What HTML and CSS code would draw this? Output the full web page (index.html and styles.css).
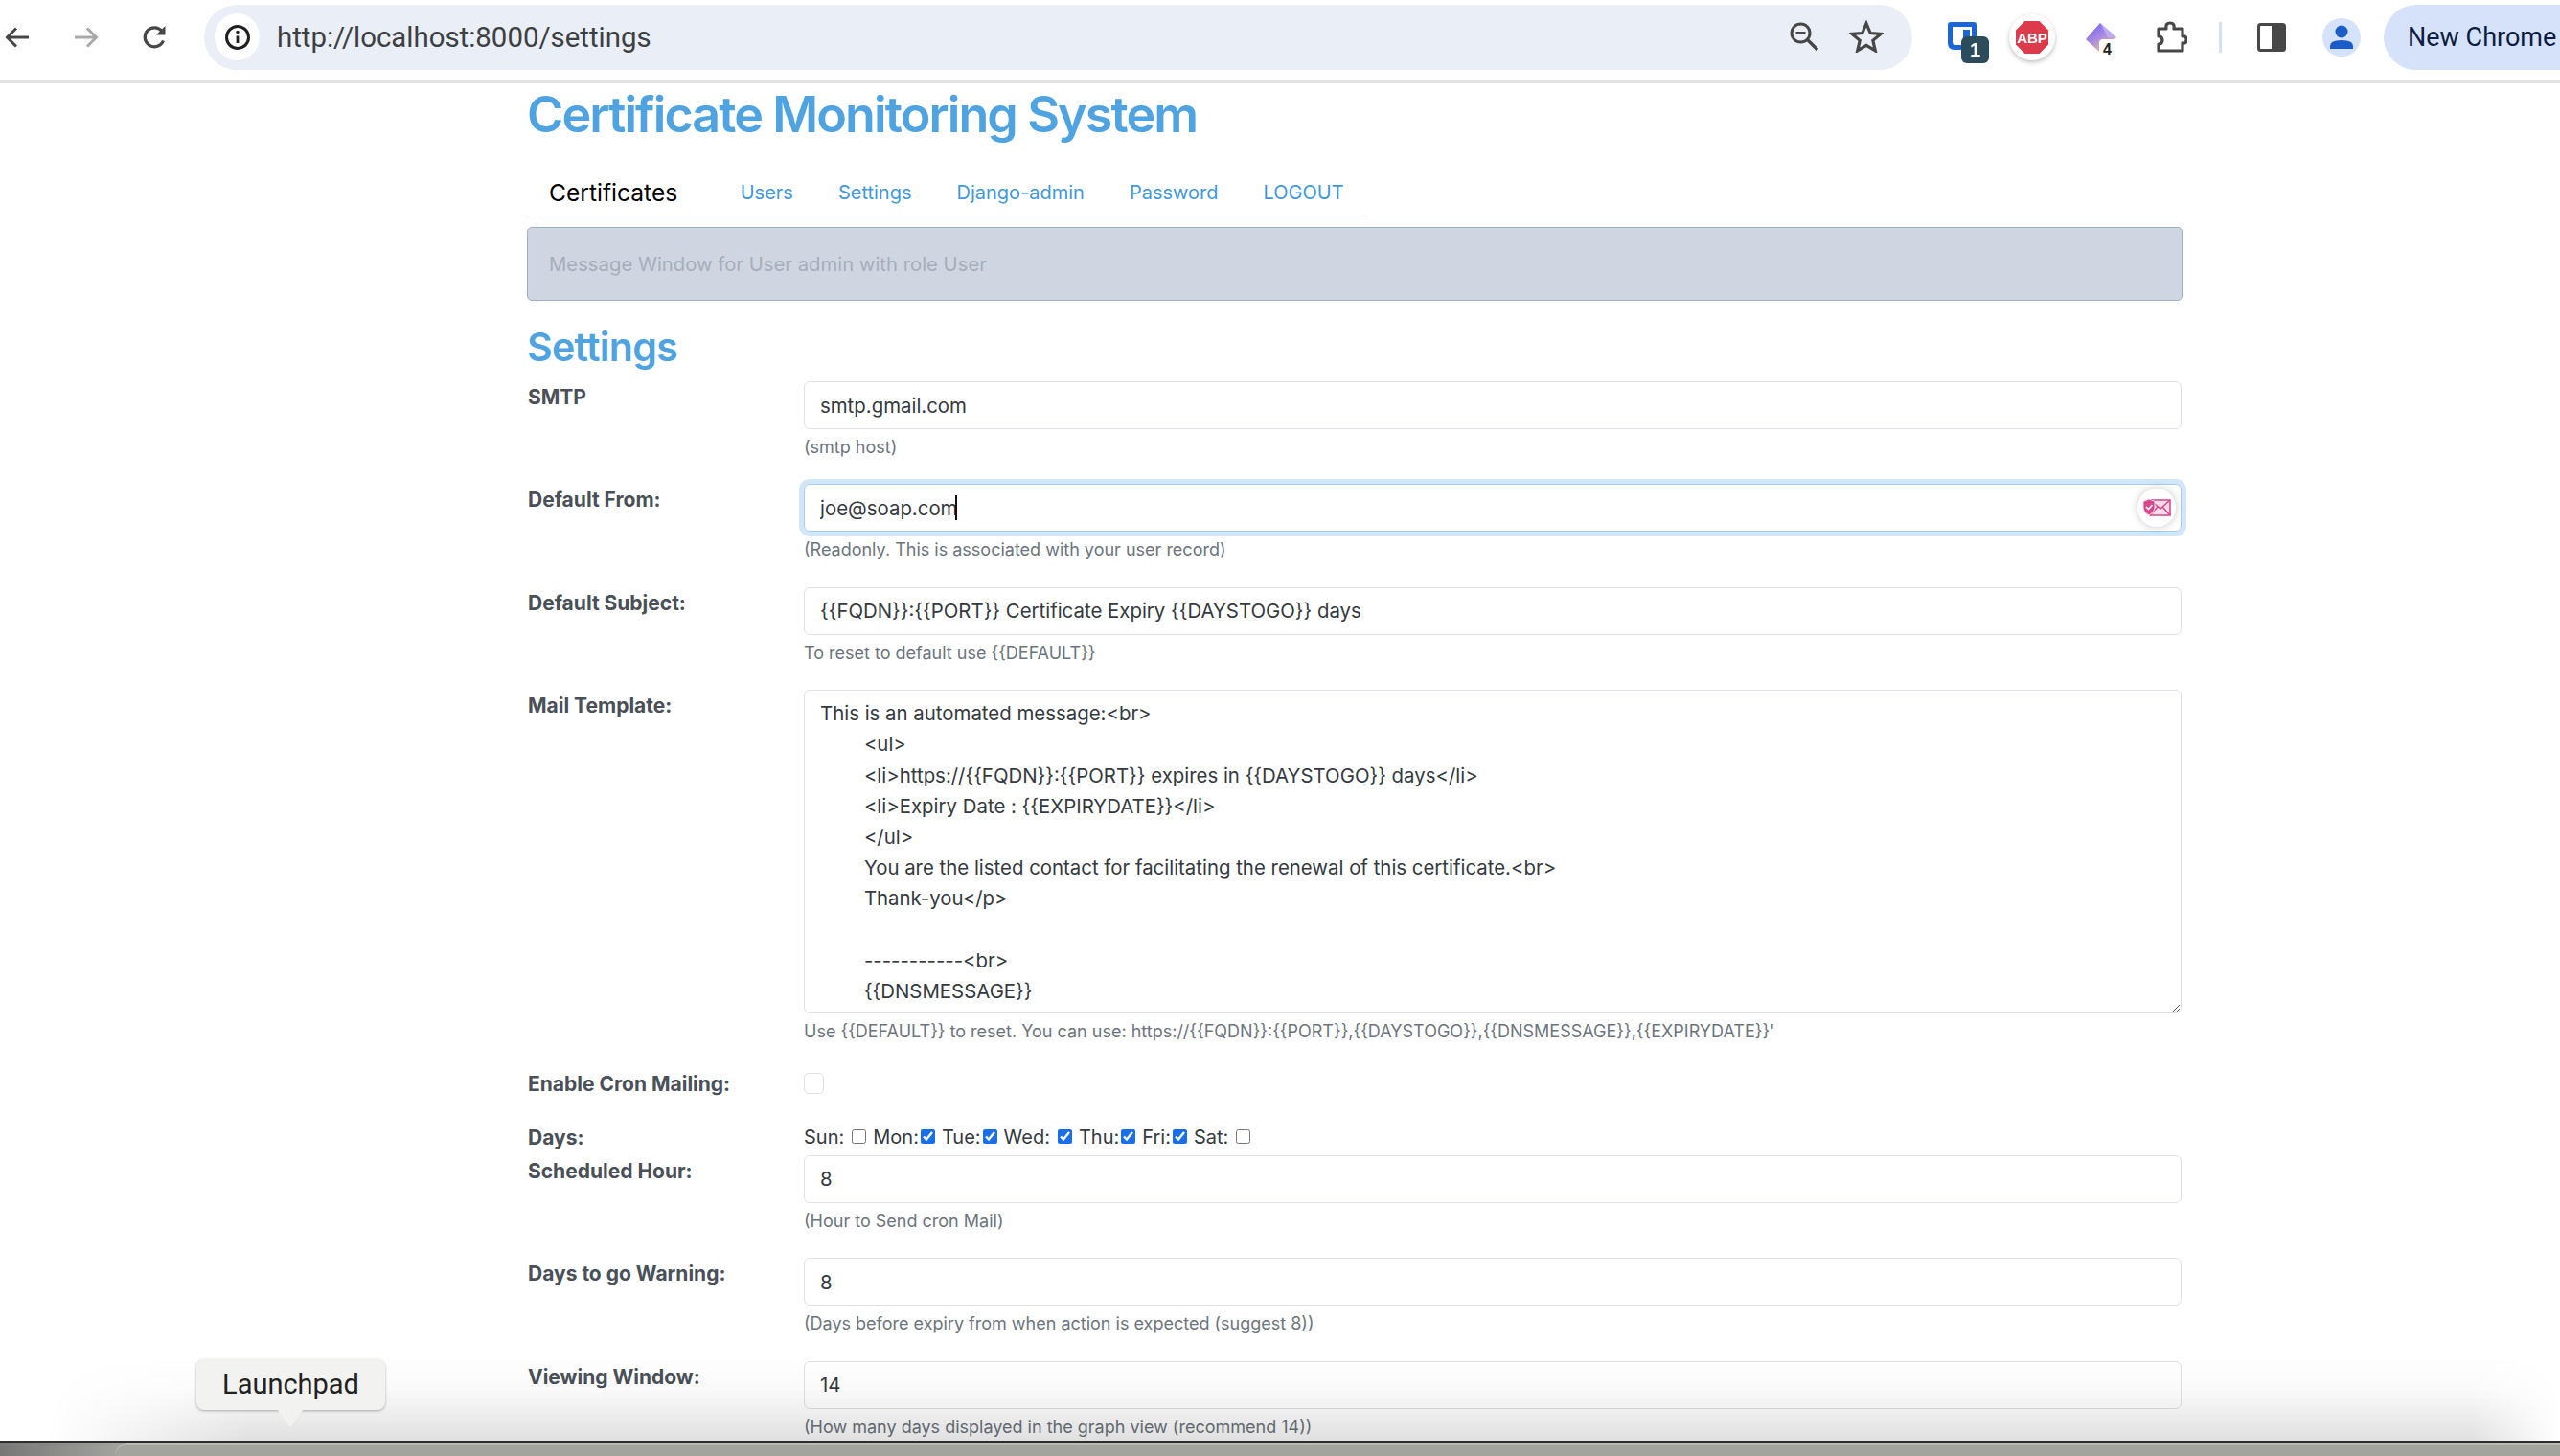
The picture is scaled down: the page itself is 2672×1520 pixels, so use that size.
FILE: index.html
```html
<!DOCTYPE html>
<html lang="en">
<head>
  <meta charset="UTF-8">
  <title>Certificate Monitoring System</title>
  <link rel="stylesheet" href="styles.css">
</head>
<body>
  <header class="toolbar">
    <div class="nav-buttons">
      <svg class="nav-icon" width="30" height="30" viewBox="0 0 30 30"><path d="M27 15H5M14 5.500 4.500 15l9.500 9.500" fill="none" stroke="#474747" stroke-width="3"/></svg>
      <svg class="nav-icon nav-fwd" width="30" height="30" viewBox="0 0 30 30"><path d="M3 15h22M16 5.500l9.500 9.500-9.500 9.500" fill="none" stroke="#a9a9a9" stroke-width="3"/></svg>
      <svg class="nav-icon nav-reload" width="30" height="30" viewBox="0 0 30 30"><path d="M23.500 18.500A10 10 0 1 1 22 8.500" fill="none" stroke="#474747" stroke-width="3.200"/><path d="M25.500 3v9.500H16z" fill="#474747"/></svg>
    </div>
    <div class="omnibox">
      <span class="site-info">
        <svg width="30" height="30" viewBox="0 0 30 30"><circle cx="15" cy="15" r="11.500" fill="none" stroke="#1f1f1f" stroke-width="3"/><path d="M15 13.500v7.500" stroke="#1f1f1f" stroke-width="2.800"/><circle cx="15" cy="9.500" r="1.700" fill="#1f1f1f"/></svg>
      </span>
      <span class="url">http://localhost:8000/settings</span>
      <svg class="omni-zoom" width="32" height="32" viewBox="0 0 32 32"><circle cx="12.500" cy="12.500" r="9.500" fill="none" stroke="#474747" stroke-width="3"/><path d="M7.500 12.500h10" stroke="#474747" stroke-width="3"/><path d="M19.500 19.500 30 30" stroke="#474747" stroke-width="3.400"/></svg>
      <svg class="omni-star" width="36" height="34" viewBox="0 0 36 34"><path d="m18 3.500 4.200 10 10.800.9-8.200 7 2.500 10.500L18 26.300 8.700 31.900l2.500-10.500-8.200-7 10.800-.9z" fill="none" stroke="#474747" stroke-width="3.200"/></svg>
    </div>
    <div class="extensions">
      <span class="ext ext-shield">
        <svg width="32" height="34" viewBox="0 0 32 34"><path d="M1 4q0-3 3-3h24q3 0 3 3v26H8q-7 0-7-7z" fill="#1a66d9"/><path d="M6 6h20v19H9q-3 0-3-3z" fill="#fff"/><path d="M17 9h7v11h-7z" fill="#1a66d9"/></svg>
        <span class="ext-badge">1</span>
      </span>
      <span class="ext ext-abp">
        <svg width="36" height="36" viewBox="0 0 36 36"><path d="M10.500 1h15L35 10.500v15L25.500 35h-15L1 25.500v-15z" fill="#dc3b4b"/><text x="18" y="24" text-anchor="middle" class="abp-text">ABP</text></svg>
      </span>
      <span class="ext ext-gem">
        <svg width="34" height="32" viewBox="0 0 34 32"><defs><linearGradient id="gem" x1="0" y1="0" x2=".6" y2="1"><stop offset="0" stop-color="#6a5cf5"/><stop offset=".55" stop-color="#a98be0"/><stop offset="1" stop-color="#f2c08e"/></linearGradient></defs><path d="M16 1 1 18l15 14 17-16z" fill="url(#gem)"/><path d="M16 1l17 15-9 0z" fill="#b9aef5"/></svg>
        <span class="ext-count">4</span>
      </span>
      <svg class="ext-puzzle" width="34" height="34" viewBox="0 0 34 34"><path d="M4 8h8q-1-6 4-6t4 6h9v8q4-1 4 3.500T29 23v8H4v-7q4 0 4-4t-4-4z" fill="none" stroke="#474747" stroke-width="3.200" stroke-linejoin="round"/></svg>
      <span class="toolbar-sep"></span>
      <svg class="side-panel" width="30" height="30" viewBox="0 0 30 30"><rect x="1.500" y="1.500" width="27" height="27" rx="2" fill="none" stroke="#474747" stroke-width="3"/><rect x="15" y="1.500" width="13.500" height="27" fill="#474747"/></svg>
      <span class="avatar">
        <svg width="26" height="28" viewBox="0 0 26 28"><circle cx="13" cy="8" r="6.500" fill="#1a5cc8"/><path d="M1 26v-3q0-6 12-6t12 6v3z" fill="#1a5cc8"/></svg>
      </span>
      <span class="new-chrome">New Chrome</span>
    </div>
  </header>

  <main class="container">
    <h1 class="site-title">Certificate Monitoring System</h1>
    <nav class="tabs">
      <a class="tab tab-active">Certificates</a>
      <a class="tab">Users</a>
      <a class="tab">Settings</a>
      <a class="tab">Django-admin</a>
      <a class="tab">Password</a>
      <a class="tab">LOGOUT</a>
    </nav>
    <div class="message">Message Window for User admin with role User</div>
    <h2 class="page-title">Settings</h2>

    <form class="settings">
      <div class="row">
        <label class="row-label">SMTP</label>
        <div class="row-field">
          <input class="control" type="text" value="smtp.gmail.com">
          <small class="help">(smtp host)</small>
        </div>
      </div>
      <div class="row">
        <label class="row-label">Default From:</label>
        <div class="row-field">
          <div class="focus-wrap">
            <input class="control control-focus" type="text" value="joe@soap.com">
            <span class="caret"></span>
            <span class="mail-badge">
              <svg width="30" height="20" viewBox="0 0 30 20"><rect x="8" y="2" width="21" height="16" fill="#f6dbe8" stroke="#d6478a" stroke-width="1.500"/><path d="m8 2 11 9 10-9M8 18l8-9M29 18l-8-9" fill="none" stroke="#d6478a" stroke-width="1.500"/><path d="M7 1l6 2.500V10q0 5-6 8-6-3-6-8V3.500z" fill="#d6478a" stroke="#f6dbe8"/><path d="m4 9 2.500 2.500L10.500 7" fill="none" stroke="#fff" stroke-width="1.600"/></svg>
            </span>
          </div>
          <small class="help">(Readonly. This is associated with your user record)</small>
        </div>
      </div>
      <div class="row">
        <label class="row-label">Default Subject:</label>
        <div class="row-field">
          <input class="control" type="text" value="{{FQDN}}:{{PORT}} Certificate Expiry {{DAYSTOGO}} days">
          <small class="help">To reset to default use {{DEFAULT}}</small>
        </div>
      </div>
      <div class="row row-template">
        <label class="row-label">Mail Template:</label>
        <div class="row-field">
          <textarea class="control template" spellcheck="false">This is an automated message:&lt;br&gt;
        &lt;ul&gt;
        &lt;li&gt;https://{{FQDN}}:{{PORT}} expires in {{DAYSTOGO}} days&lt;/li&gt;
        &lt;li&gt;Expiry Date : {{EXPIRYDATE}}&lt;/li&gt;
        &lt;/ul&gt;
        You are the listed contact for facilitating the renewal of this certificate.&lt;br&gt;
        Thank-you&lt;/p&gt;

        -----------&lt;br&gt;
        {{DNSMESSAGE}}</textarea>
          <small class="help">Use {{DEFAULT}} to reset. You can use: https://{{FQDN}}:{{PORT}},{{DAYSTOGO}},{{DNSMESSAGE}},{{EXPIRYDATE}}'</small>
        </div>
      </div>
      <div class="row row-cron">
        <label class="row-label">Enable Cron Mailing:</label>
        <div class="row-field"><span class="cron-check"></span></div>
      </div>
      <div class="row row-days">
        <label class="row-label">Days:</label>
        <div class="row-field days">
          <span>Sun:</span><input type="checkbox">
          <span>Mon:</span><input class="tight" type="checkbox" checked>
          <span>Tue:</span><input class="tight" type="checkbox" checked>
          <span>Wed:</span><input type="checkbox" checked>
          <span>Thu:</span><input class="tight" type="checkbox" checked>
          <span>Fri:</span><input class="tight" type="checkbox" checked>
          <span>Sat:</span><input type="checkbox">
        </div>
      </div>
      <div class="row">
        <label class="row-label">Scheduled Hour:</label>
        <div class="row-field">
          <input class="control" type="text" value="8">
          <small class="help">(Hour to Send cron Mail)</small>
        </div>
      </div>
      <div class="row">
        <label class="row-label">Days to go Warning:</label>
        <div class="row-field">
          <input class="control" type="text" value="8">
          <small class="help">(Days before expiry from when action is expected (suggest 8))</small>
        </div>
      </div>
      <div class="row">
        <label class="row-label">Viewing Window:</label>
        <div class="row-field">
          <input class="control" type="text" value="14">
          <small class="help">(How many days displayed in the graph view (recommend 14))</small>
        </div>
      </div>
    </form>
  </main>

  <div class="dock-shadow"></div>
  <div class="dock-strip">
    <div class="dock-window"></div>
  </div>
  <div class="launchpad-tip">Launchpad</div>
</body>
</html>
```

FILE: styles.css
```css
* {
  box-sizing: border-box;
  margin: 0;
  padding: 0;
}

html, body {
  height: 100%;
  overflow: hidden;
}

body {
  position: relative;
  font-family: Inter, "Liberation Sans", sans-serif;
  background: #fff;
  color: #343a40;
}

/* browser chrome */
.toolbar {
  display: flex;
  align-items: center;
  height: 87px;
  padding-bottom: 7px;
  border-bottom: 3px solid #e3e3e3;
  background: #fff;
  font-family: Roboto, sans-serif;
}

.nav-buttons {
  display: flex;
  align-items: center;
  width: 213px;
  flex-shrink: 0;
}

.nav-icon {
  margin-left: 3px;
}

.nav-fwd {
  margin-left: 42px;
}

.nav-reload {
  margin-left: 42px;
}

.omnibox {
  display: flex;
  align-items: center;
  width: 1783px;
  height: 68px;
  padding-left: 11px;
  border-radius: 34px;
  background: #eaeef6;
}

.site-info {
  display: flex;
  align-items: center;
  justify-content: center;
  width: 47px;
  height: 49px;
  border-radius: 50%;
  background: #fff;
}

.url {
  margin-left: 18px;
  font-size: 29.400px;
  color: #3c4043;
  flex: 1;
}

.omni-zoom {
  margin: 0 31px 2px 0;
}

.omni-star {
  margin: 0 30px 2px 0;
}

.extensions {
  display: flex;
  align-items: center;
  flex: 1;
  min-width: 0;
  padding-left: 36px;
}

.ext {
  position: relative;
  display: flex;
  flex-shrink: 0;
}

.ext-badge {
  position: absolute;
  left: 15px;
  top: 16px;
  width: 29px;
  height: 28px;
  border-radius: 6px;
  background: #2c4c5c;
  color: #fff;
  font: bold 20px/28px "Liberation Sans", sans-serif;
  text-align: center;
}

.ext-abp {
  align-items: center;
  justify-content: center;
  width: 48px;
  height: 48px;
  margin-left: 33px;
  border-radius: 50%;
  background: #fff;
  box-shadow: 0 2px 5px rgba(0, 0, 0, 0.25);
}

.abp-text {
  font: bold 15px "Liberation Sans", sans-serif;
  fill: #fff;
}

.ext-gem {
  margin-left: 31px;
}

.ext-count {
  position: absolute;
  left: 15px;
  top: 18px;
  padding: 2px 4px 0;
  border-radius: 4px 0 0 0;
  background: #fff;
  color: #222;
  font: bold 16px/18px "Liberation Sans", sans-serif;
}

.ext-puzzle {
  margin-left: 39px;
  flex-shrink: 0;
}

.toolbar-sep {
  width: 3px;
  height: 32px;
  margin-left: 33px;
  background: #d3e0f7;
  flex-shrink: 0;
}

.side-panel {
  margin-left: 37px;
  flex-shrink: 0;
}

.avatar {
  display: flex;
  align-items: flex-end;
  justify-content: center;
  width: 40px;
  height: 40px;
  margin-left: 38px;
  padding-bottom: 6px;
  border-radius: 50%;
  background: #d6e2fa;
  flex-shrink: 0;
}

.new-chrome {
  height: 68px;
  margin-left: 24px;
  padding-left: 25px;
  border-radius: 34px 0 0 34px;
  background: #d6e2fa;
  color: #0b1d42;
  font-size: 27px;
  line-height: 68px;
  white-space: nowrap;
  flex: 1;
}

/* page */
.container {
  width: 1728px;
  margin-left: 550px;
}

.site-title {
  color: #4fa3e0;
  font-size: 52px;
  font-weight: 600;
  letter-spacing: -1.900px;
  line-height: 66px;
}

.tabs {
  display: flex;
  align-items: center;
  width: 876px;
  height: 73px;
  padding-top: 24px;
  border-bottom: 1px solid #dee2e6;
}

.tab {
  padding: 0 23.500px;
  color: #4298d8;
  font-size: 20px;
  white-space: nowrap;
}

.tab-active {
  padding: 0 42px 0 23px;
  color: #000;
  font-size: 24.600px;
}

.message {
  height: 77px;
  margin-top: 11px;
  padding-left: 22px;
  border: 1px solid #9fb0c4;
  border-radius: 5px;
  background: #cfd6e1;
  color: #a6aebb;
  font-size: 20.300px;
  line-height: 75px;
}

.page-title {
  margin-top: 22px;
  color: #4fa3e0;
  font-size: 41px;
  font-weight: 600;
  letter-spacing: -0.700px;
  line-height: 52px;
}

.settings {
  margin-top: 10px;
  padding-right: 1.500px;
}

.row {
  display: flex;
  min-height: 107.400px;
}

.row-label {
  width: 289px;
  padding: 4px 0 0 1px;
  color: #495057;
  font-size: 21px;
  font-weight: 700;
  line-height: 26px;
  flex-shrink: 0;
}

.row-field {
  flex: 1;
  min-width: 0;
}

.control {
  display: block;
  width: 100%;
  height: 50px;
  padding: 0 16px;
  border: 1px solid #dfe2e6;
  border-radius: 6px;
  background: transparent;
  color: #343a40;
  font-family: Inter, "Liberation Sans", sans-serif;
  font-size: 20.400px;
  outline: none;
}

.focus-wrap {
  position: relative;
}

.control-focus {
  border-color: #a3cff0;
  box-shadow: 0 0 0 5px #d2e6f8;
}

.caret {
  position: absolute;
  left: 158px;
  top: 12px;
  width: 2px;
  height: 26px;
  background: #111;
}

.mail-badge {
  position: absolute;
  right: 6px;
  top: 5px;
  display: flex;
  align-items: center;
  justify-content: center;
  width: 40px;
  height: 40px;
  border-radius: 50%;
  background: #fff;
  box-shadow: 0 0 8px rgba(0, 0, 0, 0.22);
}

.help {
  display: block;
  margin-top: 7px;
  color: #6c757d;
  font-size: 18px;
  line-height: 24px;
}

.row-template {
  min-height: 399px;
}

.template {
  height: 338px;
  padding: 8px 16px;
  line-height: 32.200px;
  overflow: hidden;
  resize: vertical;
  white-space: pre;
}

.row-cron {
  min-height: 56px;
}

.row-cron .row-label {
  padding-top: 0;
}

.cron-check {
  display: block;
  width: 21px;
  height: 22px;
  margin-top: 1px;
  border: 1px solid #dfe2e6;
  border-radius: 5px;
}

.row-days {
  min-height: 30.700px;
}

.row-days .row-label {
  padding-top: 0;
}

.days {
  display: flex;
  align-items: center;
  height: 24px;
  font-size: 20px;
}

.days input {
  width: 15px;
  height: 15px;
  margin: -2px 7px 0 8px;
  accent-color: #1a6fe8;
}

.days input.tight {
  margin-left: 2px;
}

/* macOS dock peeking in at the bottom */
.dock-shadow {
  position: absolute;
  left: 0;
  right: 0;
  bottom: 16px;
  height: 90px;
  background: linear-gradient(to bottom, rgba(0, 0, 0, 0), rgba(0, 0, 0, 0.02) 40%, rgba(0, 0, 0, 0.12));
  -webkit-mask-image: linear-gradient(to right, transparent 50px, #000 260px, #000 2580px, transparent 2672px);
  mask-image: linear-gradient(to right, transparent 50px, #000 260px, #000 2580px, transparent 2672px);
}

.dock-strip {
  position: absolute;
  left: 0;
  right: 0;
  bottom: 0;
  height: 16px;
  border-top: 2px solid #2e2e2e;
  background: linear-gradient(to right, #777, #a5a5a0 130px);
}

.dock-window {
  height: 14px;
  margin-left: 120px;
  border-radius: 14px 0 0 0;
  border-top: 2px solid #bcbcb6;
  background: #a4a49e;
}

.launchpad-tip {
  position: absolute;
  left: 205px;
  top: 1419px;
  width: 197px;
  height: 53px;
  border-radius: 8px;
  background: #f2f2f0;
  box-shadow: 0 1px 3px rgba(0, 0, 0, 0.3);
  color: #222;
  font-family: Roboto, sans-serif;
  font-size: 29px;
  line-height: 52px;
  text-align: center;
}

.launchpad-tip::after {
  content: "";
  position: absolute;
  left: 85px;
  bottom: -18px;
  border-left: 13px solid transparent;
  border-right: 13px solid transparent;
  border-top: 18px solid #f2f2f0;
}
```
